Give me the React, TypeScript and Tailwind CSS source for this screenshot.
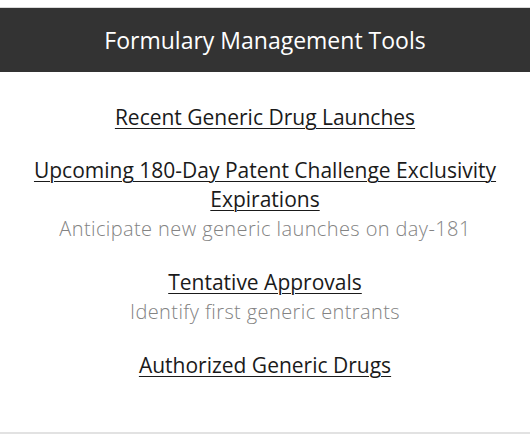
const items = [
  { title: 'Recent Generic Drug Launches' },
  {
    title: 'Upcoming 180-Day Patent Challenge Exclusivity Expirations',
    note: 'Anticipate new generic launches on day-181',
  },
  { title: 'Tentative Approvals', note: 'Identify first generic entrants' },
  { title: 'Authorized Generic Drugs' },
];

export default function App() {
  return (
    <div className="w-[530px] h-[442px] bg-white pt-[7px] font-['Open_Sans',sans-serif]">
      <div className="border-t border-[#d9d9d9] bg-[#333333] h-[65px] flex items-center justify-center">
        <h2 className="text-white text-[23px]">Formulary Management Tools</h2>
      </div>
      <div className="h-[362px] border-b-2 border-[#e2e2e2] pt-[31px] px-8 flex flex-col gap-6 text-center">
        {items.map((it) => (
          <div key={it.title}>
            <p className="text-[21px] leading-[29px]">
              <a href="#" className="text-[#1a1a1a] underline underline-offset-[3px] decoration-1">
                {it.title}
              </a>
            </p>
            {it.note && (
              <p className="text-[#838383] text-[20px] leading-[30px] font-light tracking-[0.4px]">{it.note}</p>
            )}
          </div>
        ))}
      </div>
    </div>
  );
}
